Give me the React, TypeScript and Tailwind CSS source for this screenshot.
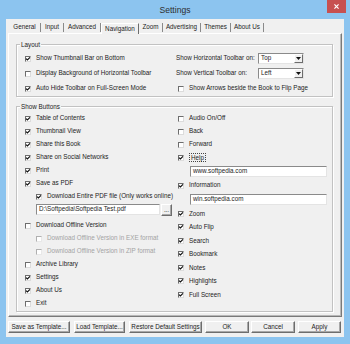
import React from 'react';

const Box = ({ checked, disabled }: { checked?: boolean; disabled?: boolean }) => (
  <span
    className={`relative flex w-[6px] h-[6px] shrink-0 bg-white border-t border-l border-b border-r ${
      disabled ? 'border-t-[#b0b0b0] border-l-[#b0b0b0] border-b-[#e8e8e8] border-r-[#e8e8e8] bg-[#f4f4f4]' : 'border-t-[#6d6d6d] border-l-[#6d6d6d] border-b-[#dcdcdc] border-r-[#dcdcdc]'
    }`}
  >
    {checked && (
      <svg viewBox="0 0 6 6" className="absolute -left-[1px] -top-[1px] w-[6px] h-[6px]">
        <path d="M1 2.6 L2.4 4 L5 1.3" fill="none" stroke="#111" strokeWidth="1.2" />
      </svg>
    )}
  </span>
);

const Check = ({
  label,
  checked,
  disabled,
  h = 'h-[13px]',
  indent = '',
  focus,
}: {
  label: string;
  checked?: boolean;
  disabled?: boolean;
  h?: string;
  indent?: string;
  focus?: boolean;
}) => (
  <div className={`flex items-center ${h} ${indent}`}>
    <Box checked={checked} disabled={disabled} />
    <span
      className={`ml-[5px] whitespace-nowrap ${disabled ? 'text-[#a3a3a3]' : ''} ${
        focus ? 'border border-dotted border-[#444] -ml-[0px] px-[1px] leading-[7px]' : ''
      }`}
    >
      {label}
    </span>
  </div>
);

const TextBox = ({ value, className }: { value: string; className: string }) => (
  <div
    className={`flex items-center bg-white border-t border-l border-t-[#8a8a8a] border-l-[#8a8a8a] border-b border-r border-b-[#e4e4e4] border-r-[#e4e4e4] pl-[2px] whitespace-nowrap ${className}`}
  >
    {value}
  </div>
);

const Select = ({ value }: { value: string }) => (
  <div className="flex items-stretch w-[46px] h-[11px] bg-white border-t border-l border-t-[#8a8a8a] border-l-[#8a8a8a] border-b border-r border-b-[#e4e4e4] border-r-[#e4e4e4]">
    <span className="flex-1 flex items-center pl-[2px]">{value}</span>
    <span className="w-[9px] flex items-center justify-center bg-[#f0f0f0] border-t border-l border-white border-b border-r border-b-[#6d6d6d] border-r-[#6d6d6d]">
      <svg viewBox="0 0 5 3" className="w-[5px] h-[3px]">
        <path d="M0 0 H5 L2.5 3 Z" fill="#111" />
      </svg>
    </span>
  </div>
);

const Button = ({ label, className }: { label: string; className: string }) => (
  <div
    className={`flex items-center justify-center h-[12px] bg-[#f0f0f0] border-t border-l border-white border-b border-r border-b-[#6d6d6d] border-r-[#6d6d6d] shadow-[inset_-1px_-1px_0_#a8a8a8] whitespace-nowrap ${className}`}
  >
    {label}
  </div>
);

const GroupBox = ({ title, className, children }: { title: string; className: string; children: React.ReactNode }) => (
  <div className={`relative border border-[#c2c2c2] shadow-[1px_1px_0_#ffffff,inset_1px_1px_0_#ffffff] ${className}`}>
    <span className="absolute left-[3px] -top-[4px] bg-[#f0f0f0] px-[1px] leading-[7px]">{title}</span>
    {children}
  </div>
);

const tabs = [
  { name: 'General', w: 'w-[32px]' },
  { name: 'Input', w: 'w-[23px]' },
  { name: 'Advanced', w: 'w-[37px]' },
  { name: 'Navigation', w: 'w-[38px]' },
  { name: 'Zoom', w: 'w-[24px]' },
  { name: 'Advertising', w: 'w-[38px]' },
  { name: 'Themes', w: 'w-[30px]' },
  { name: 'About Us', w: 'w-[33px]' },
];

export default function App() {
  return (
    <div className="w-[350px] h-[344px] bg-[#8cc4ef] flex flex-col overflow-hidden font-['Liberation_Sans',Arial,sans-serif] text-[6.3px] leading-none text-[#1c1c1c]">
      {/* Title bar */}
      <div className="relative h-[19px] flex items-center justify-center">
        <span className="text-[8.6px] text-[#2e2e2e] pt-[1px]">Settings</span>
        <div className="absolute right-[4px] top-0 w-[19px] h-[13px] bg-[#c75050] flex items-center justify-center">
          <svg viewBox="0 0 6 6" className="w-[5px] h-[5px]">
            <path d="M0.5 0.5 L5.5 5.5 M5.5 0.5 L0.5 5.5" stroke="#fff" strokeWidth="1.4" />
          </svg>
        </div>
      </div>

      {/* Client area */}
      <div className="h-[318px] mx-[6px] bg-[#f0f0f0] flex flex-col">
        {/* Tabs */}
        <div className="h-[14px] flex items-end pl-[3px]">
          {tabs.map((t) =>
            t.name === 'Navigation' ? (
              <div
                key={t.name}
                className={`${t.w} relative z-10 -mb-[1px] h-[11px] bg-[#f0f0f0] flex items-center justify-center border-t border-l border-white border-r border-r-[#6d6d6d]`}
              >
                {t.name}
              </div>
            ) : (
              <div key={t.name} className={`${t.w} h-[10px] mb-[1px] flex items-center justify-center`}>
                <span className="flex-1 text-center">{t.name}</span>
                <span className="w-px h-[9px] bg-[#8a8a8a]" />
              </div>
            )
          )}
        </div>

        {/* Tab panel */}
        <div className="h-[284px] mx-[2px] border-t border-l border-white border-b border-r border-b-[#7a7a7a] border-r-[#7a7a7a] shadow-[inset_-1px_-1px_0_#b8b8b8] flex flex-col">
          <GroupBox title="Layout" className="mt-[10px] ml-[7px] mr-[8px] h-[53px] flex pt-[6px] pl-[8px]">
            <div className="w-[151px] flex flex-col">
              <Check label="Show Thumbnail Bar on Bottom" checked h="h-[15px]" />
              <Check label="Display Background of Horizontal Toolbar" h="h-[15px]" />
              <Check label="Auto Hide Toolbar on Full-Screen Mode" checked h="h-[15px]" />
            </div>
            <div className="flex flex-col">
              <div className="h-[15px] flex items-center">
                <span className="w-[82px] whitespace-nowrap">Show Horizontal Toolbar on:</span>
                <Select value="Top" />
              </div>
              <div className="h-[15px] flex items-center">
                <span className="w-[82px] whitespace-nowrap">Show Vertical Toolbar on:</span>
                <Select value="Left" />
              </div>
              <Check label="Show Arrows beside the Book to Flip Page" h="h-[15px]" indent="ml-[2px]" />
            </div>
          </GroupBox>

          <GroupBox title="Show Buttons" className="mt-[9px] ml-[7px] mr-[8px] h-[206px] flex pt-[5px] pl-[8px]">
            <div className="w-[153px] flex flex-col">
              <Check label="Table of Contents" checked />
              <Check label="Thumbnail View" checked />
              <Check label="Share this Book" checked />
              <Check label="Share on Social Networks" checked />
              <Check label="Print" checked />
              <Check label="Save as PDF" checked />
              <Check label="Download Entire PDF file (Only works online)" checked indent="ml-[11px]" />
              <div className="h-[16px] flex items-start pt-[1px] ml-[11px]">
                <TextBox value="D:\Softpedia\Softpedia Test.pdf" className="w-[124px] h-[11px]" />
                <Button label="..." className="w-[11px] h-[11px] ml-[1px]" />
              </div>
              <Check label="Download Offline Version" />
              <Check label="Download Offline Version in EXE format" disabled indent="ml-[11px]" />
              <Check label="Download Offline Version in ZIP format" disabled indent="ml-[11px]" />
              <Check label="Archive Library" />
              <Check label="Settings" checked />
              <Check label="About Us" checked />
              <Check label="Exit" />
            </div>
            <div className="flex flex-col">
              <Check label="Audio On/Off" />
              <Check label="Back" />
              <Check label="Forward" />
              <Check label="Help" checked focus />
              <div className="h-[15px] flex items-center ml-[12px]">
                <TextBox value="www.softpedia.com" className="w-[137px] h-[11px]" />
              </div>
              <Check label="Information" checked />
              <div className="h-[15px] flex items-center ml-[12px]">
                <TextBox value="win.softpedia.com" className="w-[137px] h-[11px]" />
              </div>
              <Check label="Zoom" checked h="h-[13.5px]" />
              <Check label="Auto Flip" checked h="h-[13.5px]" />
              <Check label="Search" checked h="h-[13.5px]" />
              <Check label="Bookmark" checked h="h-[13.5px]" />
              <Check label="Notes" checked h="h-[13.5px]" />
              <Check label="Highlights" checked h="h-[13.5px]" />
              <Check label="Full Screen" checked h="h-[13.5px]" />
            </div>
          </GroupBox>
        </div>

        {/* Bottom buttons */}
        <div className="mt-[4px] flex pl-[2px] pr-[3px]">
          <Button label="Save as Template..." className="w-[62px]" />
          <Button label="Load Template..." className="w-[51px] ml-[4px]" />
          <Button label="Restore Default Settings" className="w-[73px] ml-[4px]" />
          <Button label="OK" className="w-[44px] ml-auto" />
          <Button label="Cancel" className="w-[44px] ml-[2px]" />
          <Button label="Apply" className="w-[43px] ml-[3px]" />
        </div>
      </div>
    </div>
  );
}
